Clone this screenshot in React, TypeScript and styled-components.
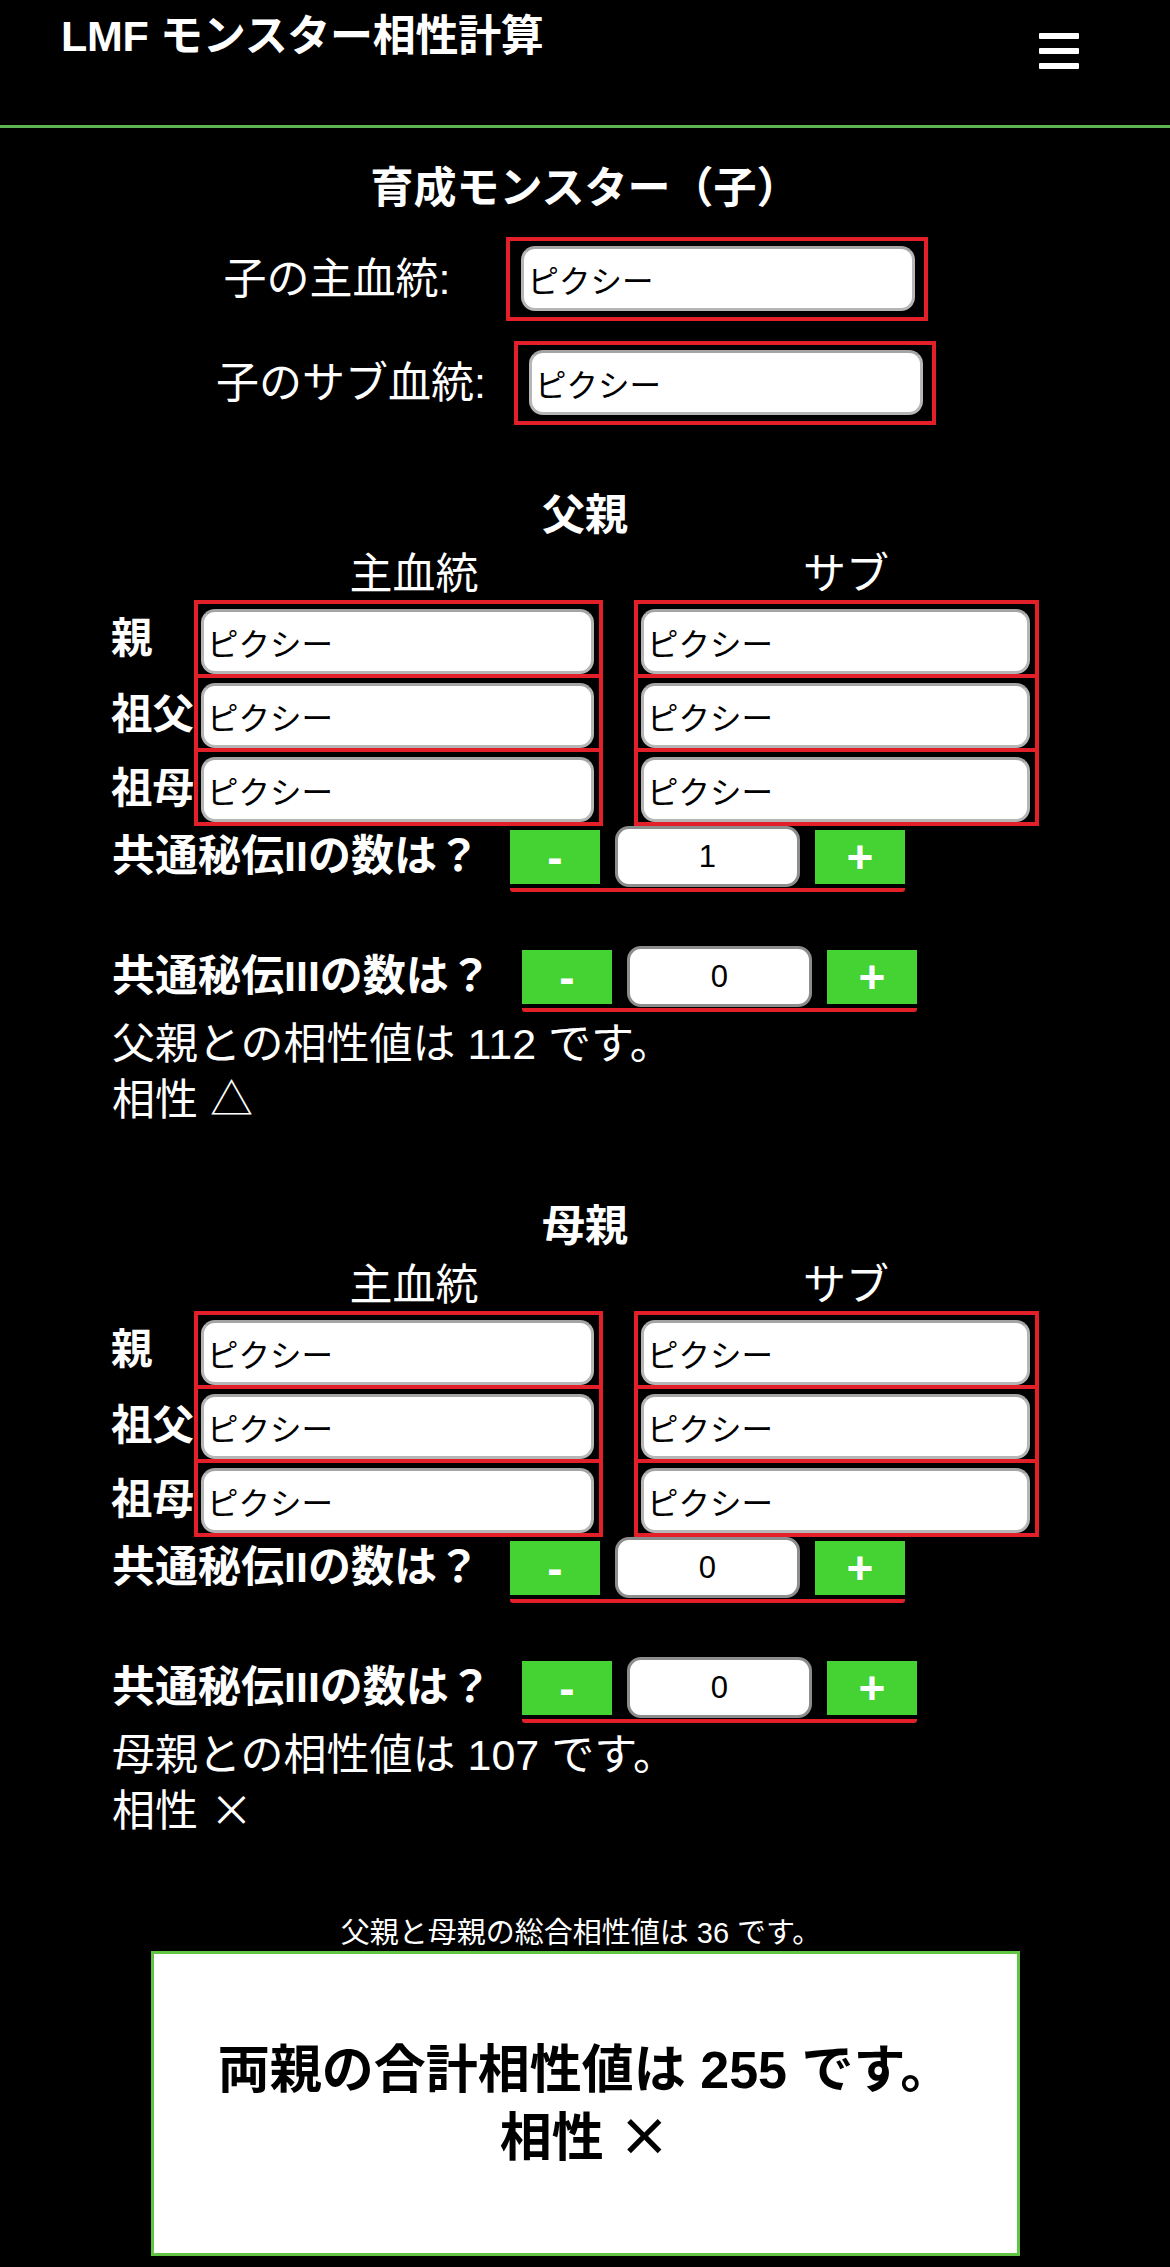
import styled, {createGlobalStyle} from 'styled-components';

const RED = '#e3202a';
const GREEN = '#45d233';
const FONT = `"Liberation Sans", "Noto Sans CJK JP", sans-serif`;

const GlobalStyle = createGlobalStyle`
  html, body {
    margin: 0;
    padding: 0;
    background: #000;
  }
  body {
    color: #fff;
    font-family: ${FONT};
  }
`;

// HEADER

const Header = styled.header`
  box-sizing: border-box;
  height: 128px;
  display: flex;
  justify-content: space-between;
  align-items: flex-start;
  padding: 12px 91px 0 61px;
  border-bottom: 3px solid #5fb554;
`;

const AppTitle = styled.h1`
  margin: 0;
  font-size: 43px;
  line-height: 48px;
  font-weight: 700;
  letter-spacing: -0.3px;
`;

const MenuButton = styled.div`
  margin-top: 21px;
  width: 40px;
  display: flex;
  flex-direction: column;
  gap: 9px;
`;

const Bar = styled.span`
  display: block;
  height: 6px;
  background: #fff;
  border-radius: 1px;
`;

// LAYOUT

const Main = styled.main`
  display: flex;
  flex-direction: column;
  padding-bottom: 11px;
`;

const SectionTitle = styled.h2<{$mt: number}>`
  margin: ${(p) => p.$mt}px 0 0;
  text-align: center;
  font-size: 43px;
  line-height: 56px;
  font-weight: 700;
`;

// CHILD

const ChildRow = styled.div<{$mt: number; $gap: number}>`
  margin-top: ${(p) => p.$mt}px;
  display: flex;
  justify-content: center;
  align-items: center;
  gap: ${(p) => p.$gap}px;
  padding-right: 18px;
`;

const FieldLabel = styled.span`
  font-size: 43px;
  line-height: 56px;
`;

const FrameBox = styled.div`
  border: 4px solid ${RED};
  padding: 5px 9px 6px 11px;
`;

const TextField = styled.input<{$w?: number}>`
  box-sizing: border-box;
  display: block;
  width: ${(p) => (p.$w ? `${p.$w}px` : '100%')};
  height: 65px;
  margin: 0;
  padding: 0 3px;
  border: 3px solid #b6b6b6;
  border-top-color: #a4a4a4;
  border-radius: 14px;
  background: #fff;
  color: #000;
  font-family: ${FONT};
  font-size: 31.5px;
  outline: none;
`;

// PARENT GRID

const LineageGrid = styled.div`
  margin-left: 111px;
  display: grid;
  grid-template-columns: 83px 440px 424px;
  align-items: center;
`;

const ColHead = styled.div`
  text-align: center;
  font-size: 43px;
  line-height: 52px;
  margin-top: 5px;
`;

const RowLabel = styled.div`
  font-size: 41.5px;
  font-weight: 700;
  line-height: 48px;
  white-space: nowrap;
`;

const Cell = styled.div<{$first: boolean; $w: number}>`
  box-sizing: border-box;
  width: ${(p) => p.$w}px;
  border: 4px solid ${RED};
  border-top-width: ${(p) => (p.$first ? 4 : 0)}px;
  padding: 5px 5px 0 3px;
  height: ${(p) => (p.$first ? 78 : 74)}px;
`;

// STEPPER

const StepRow = styled.div<{$mt: number}>`
  margin: ${(p) => p.$mt}px 0 0 112px;
  display: flex;
  align-items: flex-start;
`;

const StepLabel = styled.span`
  font-size: 43px;
  font-weight: 700;
  line-height: 61px;
  white-space: nowrap;
`;

const Stepper = styled.div`
  margin-left: 30px;
  display: flex;
  align-items: center;
  gap: 15px;
  padding-bottom: 1px;
  border-bottom: 4px solid ${RED};
  border-radius: 3px;
`;

const StepButton = styled.button`
  width: 90px;
  height: 54px;
  padding: 0;
  border: none;
  background: ${GREEN};
  color: #fff;
  font-family: ${FONT};
  font-size: 46px;
  font-weight: 700;
  line-height: 54px;
`;

const CountField = styled.input`
  box-sizing: border-box;
  width: 185px;
  height: 61px;
  margin: 0;
  border: 3px solid #8d8d8d;
  border-radius: 14px;
  background: #fff;
  color: #000;
  text-align: center;
  font-family: ${FONT};
  font-size: 31px;
  outline: none;
`;

const ResultText = styled.p`
  margin: 6px 0 0 112px;
  font-size: 43px;
  line-height: 52px;
`;

// TOTAL

const Summary = styled.p`
  margin: 78px 0 0;
  text-align: center;
  font-size: 29px;
  line-height: 36px;
  padding-right: 8px;
`;

const TotalBox = styled.div`
  box-sizing: border-box;
  align-self: center;
  width: 869px;
  height: 305px;
  background: #fff;
  border: 3px solid #62c443;
  color: #000;
  display: flex;
  flex-direction: column;
  justify-content: center;
  align-items: center;
  font-size: 52px;
  font-weight: 700;
  line-height: 64px;
  text-align: center;
`;

const Mark = styled.span`
  font-family: "Noto Sans CJK JP", sans-serif;
`;

const CountStepper = ({label, value}: StepProps) => (
  <>
    <StepLabel>{label}</StepLabel>
    <Stepper>
      <StepButton>-</StepButton>
      <CountField defaultValue={value} readOnly />
      <StepButton>+</StepButton>
    </Stepper>
  </>
);

const ParentSection = ({title, mt, count2, value, mark}: ParentProps) => {
  const rows = ['親', '祖父', '祖母'];
  return (
    <>
      <SectionTitle $mt={mt}>{title}</SectionTitle>
      <LineageGrid>
        <div />
        <ColHead>主血統</ColHead>
        <ColHead>サブ</ColHead>
        {rows.map((r, i) => [
          <RowLabel key={`${r}-l`}>{r}</RowLabel>,
          <Cell key={`${r}-m`} $first={i === 0} $w={409}>
            <TextField defaultValue="ピクシー" readOnly />
          </Cell>,
          <Cell key={`${r}-s`} $first={i === 0} $w={405}>
            <TextField defaultValue="ピクシー" readOnly />
          </Cell>,
        ])}
      </LineageGrid>
      <StepRow $mt={0}>
        <CountStepper label="共通秘伝IIの数は？" value={count2} />
      </StepRow>
      <StepRow $mt={54}>
        <CountStepper label="共通秘伝IIIの数は？" value="0" />
      </StepRow>
      <ResultText>
        {title}との相性値は {value} です。
        <br />
        相性 <Mark>{mark}</Mark>
      </ResultText>
    </>
  );
};

const App = (): JSX.Element => (
  <>
    <GlobalStyle />
    <Header>
      <AppTitle>LMF モンスター相性計算</AppTitle>
      <MenuButton>
        <Bar />
        <Bar />
        <Bar />
      </MenuButton>
    </Header>
    <Main>
      <SectionTitle $mt={32}>育成モンスター（子）</SectionTitle>
      <ChildRow $mt={21} $gap={56}>
        <FieldLabel>子の主血統:</FieldLabel>
        <FrameBox>
          <TextField $w={394} defaultValue="ピクシー" readOnly />
        </FrameBox>
      </ChildRow>
      <ChildRow $mt={20} $gap={28}>
        <FieldLabel>子のサブ血統:</FieldLabel>
        <FrameBox>
          <TextField $w={394} defaultValue="ピクシー" readOnly />
        </FrameBox>
      </ChildRow>

      <ParentSection title="父親" mt={62} count2="1" value={112} mark="△" />
      <ParentSection title="母親" mt={72} count2="0" value={107} mark="×" />

      <Summary>父親と母親の総合相性値は 36 です。</Summary>
      <TotalBox>
        <div>両親の合計相性値は 255 です。</div>
        <div>
          相性 <Mark>×</Mark>
        </div>
      </TotalBox>
    </Main>
  </>
);

// TYPES

interface StepProps {
  label: string;
  value: string;
}

interface ParentProps {
  title: string;
  mt: number;
  count2: string;
  value: number;
  mark: string;
}

export default App;
